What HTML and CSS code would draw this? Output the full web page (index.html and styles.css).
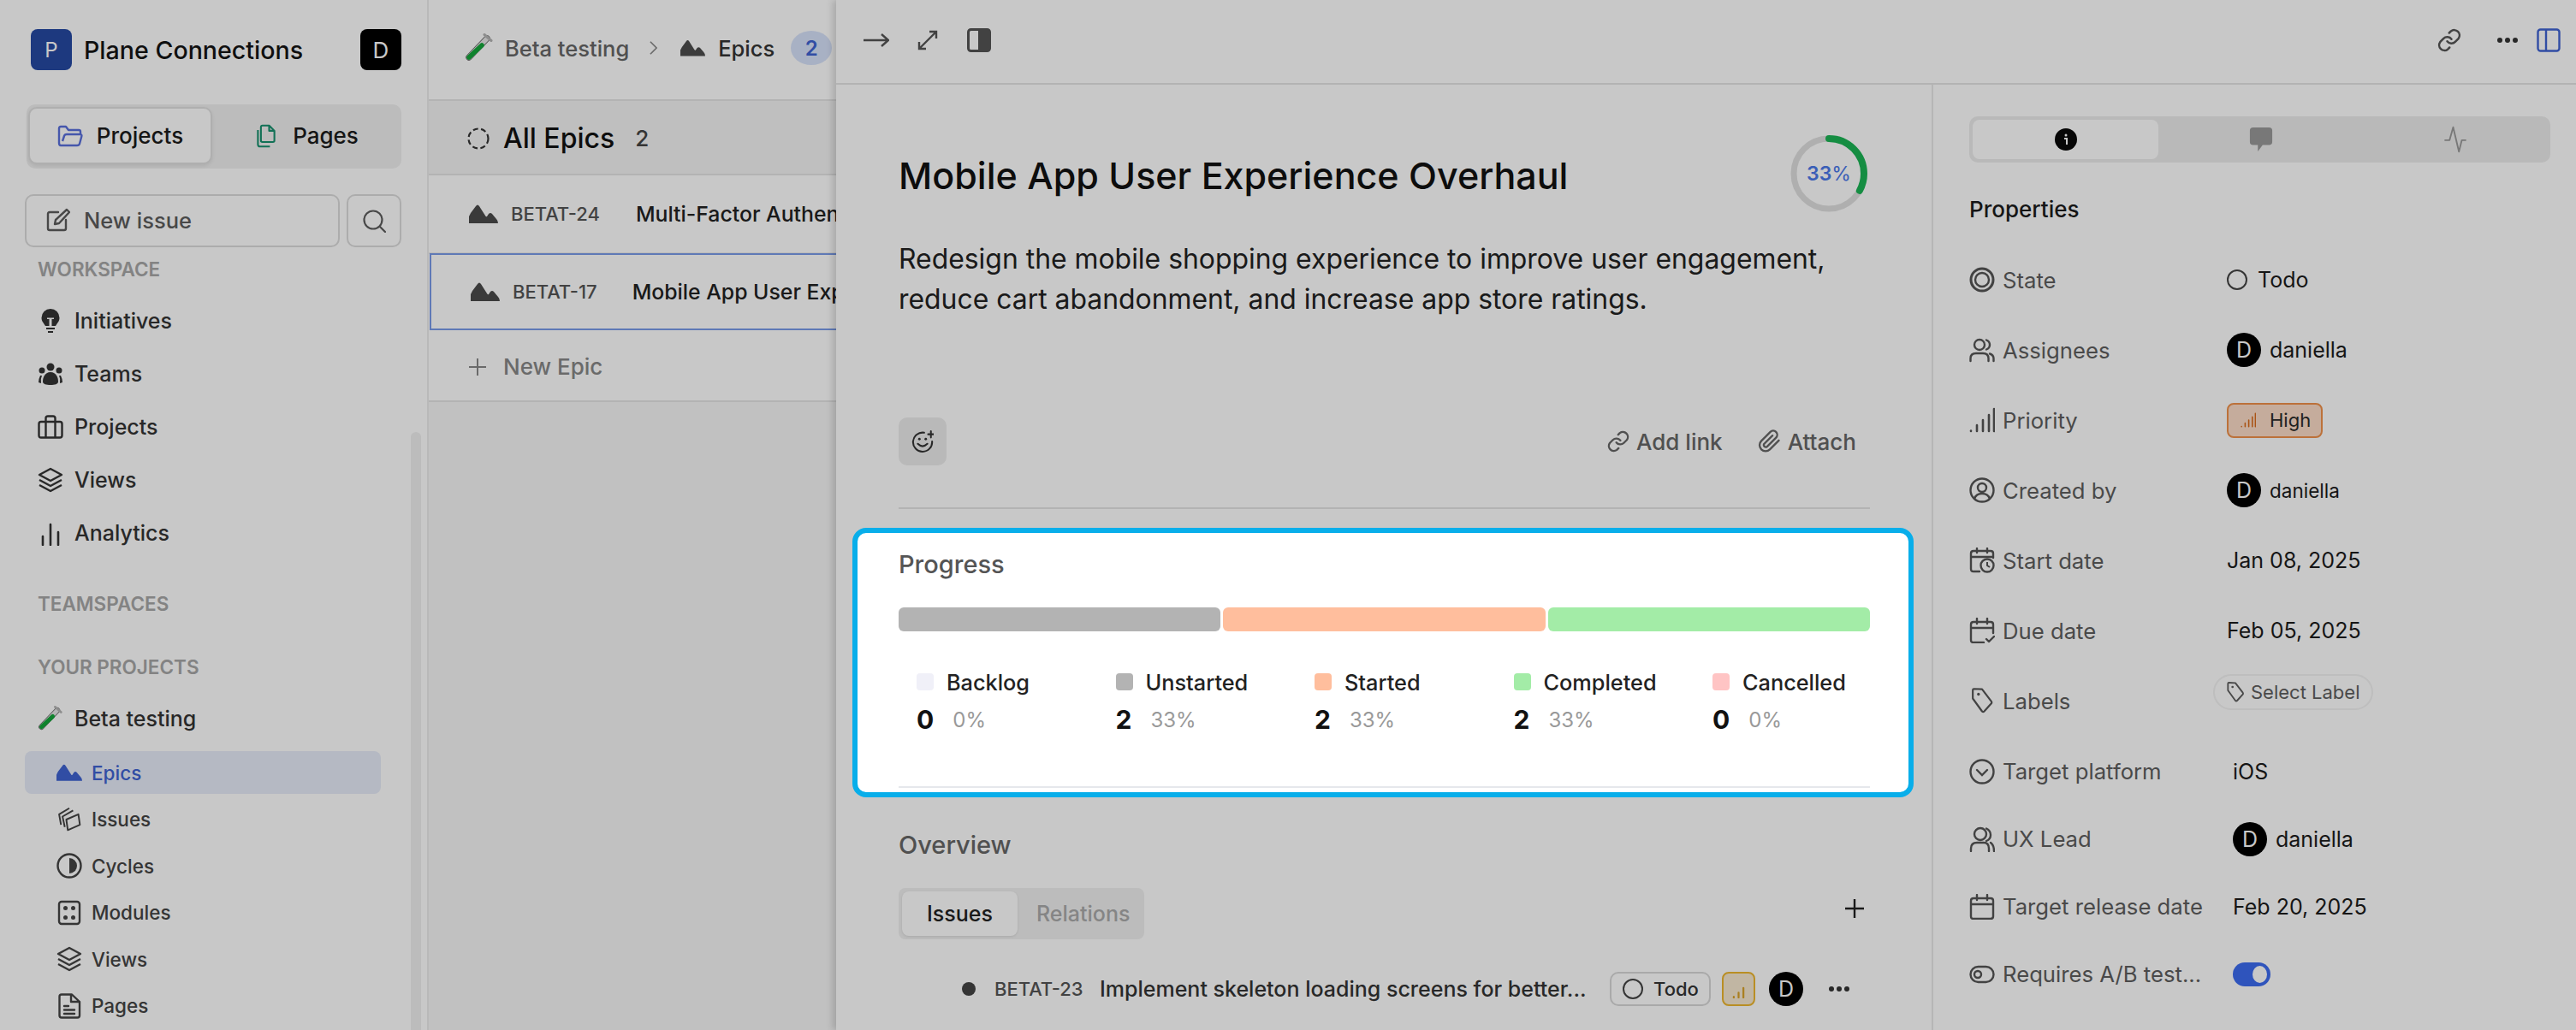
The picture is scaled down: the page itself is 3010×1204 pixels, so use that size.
FILE: index.html
```html
<!DOCTYPE html>
<html lang="en">
<head>
<meta charset="utf-8">
<title>Plane Connections</title>
<link rel="stylesheet" href="styles.css">
</head>
<body>
<svg class="defs" aria-hidden="true">
  <defs>
    <symbol id="epic" viewBox="0 0 34 22"><path fill="currentColor" d="M0 22V14Q1 12 2 10L8 2Q10 -1 12 2L19 13Q20 15 21 14L23 11Q25 9 27 11L32 17Q34 19 34 22Z"/></symbol>
    <symbol id="tube" viewBox="0 0 32 34">
      <path d="M25 6L4 28" stroke="#6a6a6a" stroke-width="7.500" stroke-linecap="round" fill="none"/>
      <path d="M25 6L4 28" stroke="#e6e6e6" stroke-width="5.500" stroke-linecap="round" fill="none"/>
      <path d="M19 14L4 28" stroke="#14a63a" stroke-width="5.500" stroke-linecap="round" fill="none"/>
      <path d="M22 1.500L30 8.500" stroke="#b5b5b5" stroke-width="3" stroke-linecap="round" fill="none"/>
    </symbol>
    <symbol id="layers" viewBox="0 0 30 30"><path fill="none" stroke="currentColor" stroke-width="2.400" stroke-linejoin="round" d="M15 2L28 9L15 16L2 9Z"/><path fill="none" stroke="currentColor" stroke-width="2.400" stroke-linejoin="round" d="M2 15L15 22L28 15M2 21L15 28L28 21"/></symbol>
    <symbol id="cal" viewBox="0 0 30 30"><path fill="none" stroke="currentColor" stroke-width="2.400" stroke-linecap="round" stroke-linejoin="round" d="M5 5H25Q28 5 28 8V26Q28 29 25 29H5Q2 29 2 26V8Q2 5 5 5ZM2 12H28M9 1V7M21 1V7"/></symbol>
    <symbol id="link" viewBox="0 0 24 24"><path fill="none" stroke="currentColor" stroke-width="2" stroke-linecap="round" stroke-linejoin="round" d="M10 13a5 5 0 0 0 7.500.5l3-3a5 5 0 0 0-7-7l-1.700 1.700M14 11a5 5 0 0 0-7.500-.5l-3 3a5 5 0 0 0 7 7l1.700-1.700"/></symbol>
    <symbol id="person" viewBox="0 0 30 30"><circle cx="12" cy="9" r="6" fill="none" stroke="currentColor" stroke-width="2.400"/><path fill="none" stroke="currentColor" stroke-width="2.400" stroke-linecap="round" d="M1.500 28V25Q1.500 19 8 19H16Q22.500 19 22.500 25V28M20 3.500Q24 5 24 9T20 14.500M24 19.500Q28.500 21 28.500 25V28"/></symbol>
    <symbol id="bars" viewBox="0 0 30 30"><path fill="none" stroke="currentColor" stroke-width="2.600" stroke-linecap="round" d="M2 28V27.500M9 28V21M16 28V15M23 28V9M29 28V2"/></symbol>
  </defs>
</svg>

<aside class="sidebar">
  <div class="workspace">
    <span class="logo">P</span>
    <span class="ws-name">Plane Connections</span>
    <span class="ws-user">D</span>
  </div>
  <div class="switch">
    <span class="switch-tab active">
      <svg class="sw-icon blue" viewBox="0 0 30 26"><path fill="none" stroke="currentColor" stroke-width="2.400" stroke-linejoin="round" d="M2 21V4Q2 2 4 2H10L13 6H25Q27 6 27 8V11M6 19L8 13Q8.500 11 11 11H26.500Q29 11 28.300 13.500L26 22Q25.500 24 23 24H4Q2 24 2 21"/></svg>
      Projects
    </span>
    <span class="switch-tab">
      <svg class="sw-icon teal" viewBox="0 0 26 32"><path fill="none" stroke="currentColor" stroke-width="2.400" stroke-linejoin="round" d="M8 2H17L24 9V22Q24 24 22 24H8Q6 24 6 22V4Q6 2 8 2ZM17 2V9H24M2 8V27Q2 30 5 30H18"/></svg>
      Pages
    </span>
  </div>
  <div class="quick">
    <button class="new-issue">
      <svg class="ni-icon" viewBox="0 0 28 28"><path fill="none" stroke="currentColor" stroke-width="2.400" stroke-linecap="round" stroke-linejoin="round" d="M14 5H4Q2 5 2 7V24Q2 26 4 26H21Q23 26 23 24V14M24 2L27 5L15 18L10 19L11 14Z"/></svg>
      New issue
    </button>
    <button class="search">
      <svg class="ni-icon" viewBox="0 0 28 28"><circle cx="13" cy="13" r="10.500" fill="none" stroke="currentColor" stroke-width="2.200"/><path d="M21 21L27 27" stroke="currentColor" stroke-width="2.200" stroke-linecap="round"/></svg>
    </button>
  </div>
  <nav class="nav">
    <div class="nav-head first">WORKSPACE</div>
    <a class="nav-row">
      <svg class="nav-icon" viewBox="0 0 24 30"><path fill="currentColor" d="M12 1A10.500 10.500 0 0 0 1.500 11.500C1.500 16 4.500 18 6 21H10.500V13H8V11.500H16V13H13.500V21H18C19.500 18 22.500 16 22.500 11.500A10.500 10.500 0 0 0 12 1ZM7 23H17V25H7ZM9 27H15V29H9Z"/></svg>
      Initiatives
    </a>
    <a class="nav-row">
      <svg class="nav-icon" viewBox="0 0 30 26"><g fill="currentColor"><circle cx="15" cy="5" r="4.500"/><circle cx="5" cy="9" r="3.500"/><circle cx="25" cy="9" r="3.500"/><path d="M15 11C8 11 6 18 6 22C6 25 10 26 15 26S24 25 24 22C24 18 22 11 15 11Z"/><path d="M3 15Q1 19 1 23L4 24Q3 19 5 15ZM27 15Q29 19 29 23L26 24Q27 19 25 15Z"/></g></svg>
      Teams
    </a>
    <a class="nav-row">
      <svg class="nav-icon" viewBox="0 0 30 28"><path fill="none" stroke="currentColor" stroke-width="2.400" stroke-linejoin="round" d="M4 8H26Q28.500 8 28.500 10.500V24Q28.500 26.500 26 26.500H4Q1.500 26.500 1.500 24V10.500Q1.500 8 4 8ZM9.500 8V26.500M20.500 8V26.500M9.500 8V4Q9.500 1.500 12 1.500H18Q20.500 1.500 20.500 4V8"/></svg>
      Projects
    </a>
    <a class="nav-row">
      <svg class="nav-icon"><use href="#layers"/></svg>
      Views
    </a>
    <a class="nav-row">
      <svg class="nav-icon" viewBox="0 0 30 30"><path d="M6 29V19M15 29V5M24 29V14" stroke="currentColor" stroke-width="2.600" stroke-linecap="round" fill="none"/></svg>
      Analytics
    </a>
    <div class="nav-head teams">TEAMSPACES</div>
    <div class="nav-head yours">YOUR PROJECTS</div>
    <a class="nav-row project">
      <svg class="nav-icon"><use href="#tube"/></svg>
      Beta testing
    </a>
    <div class="subnav">
      <a class="sub-row current"><svg class="sub-epic"><use href="#epic"/></svg>Epics</a>
      <a class="sub-row"><svg class="sub-icon" viewBox="0 0 30 34"><path fill="none" stroke="currentColor" stroke-width="2.200" stroke-linejoin="round" d="M4 24L1.500 10L15 2M9 27L6 13L20 5M13 31L11 17L27 10L29 24Z"/></svg>Issues</a>
      <a class="sub-row"><svg class="sub-icon" viewBox="0 0 30 30"><circle cx="15" cy="15" r="13.500" fill="none" stroke="currentColor" stroke-width="2.400"/><path fill="currentColor" d="M15 6A9 9 0 0 1 15 24Z"/></svg>Cycles</a>
      <a class="sub-row"><svg class="sub-icon" viewBox="0 0 30 30"><rect x="3" y="2" width="24" height="26" rx="3" fill="none" stroke="currentColor" stroke-width="2.400"/><g fill="currentColor"><circle cx="10.500" cy="9.500" r="2.500"/><circle cx="19.500" cy="9.500" r="2.500"/><circle cx="10.500" cy="20.500" r="2.500"/><circle cx="19.500" cy="20.500" r="2.500"/></g></svg>Modules</a>
      <a class="sub-row"><svg class="sub-icon"><use href="#layers"/></svg>Views</a>
      <a class="sub-row"><svg class="sub-icon" viewBox="0 0 30 30"><path fill="none" stroke="currentColor" stroke-width="2.400" stroke-linejoin="round" stroke-linecap="round" d="M6 1.500H18L27 10V26Q27 28.500 24.500 28.500H6Q3.500 28.500 3.500 26V4Q3.500 1.500 6 1.500ZM17 1.500V10H27M9 15H14M9 19.500H21M9 24H21"/></svg>Pages</a>
    </div>
  </nav>
  <span class="scroll-thumb"></span>
</aside>

<main class="main">
  <header class="crumbs">
    <svg class="tube"><use href="#tube"/></svg>
    <span class="crumb">Beta testing</span>
    <svg class="chev" viewBox="0 0 10 20"><path d="M1 2L9 10L1 18" fill="none" stroke="currentColor" stroke-width="1.800"/></svg>
    <svg class="epic-crumb"><use href="#epic"/></svg>
    <span class="crumb-now">Epics</span>
    <span class="badge">2</span>
  </header>
  <div class="listbar">
    <svg class="dash" viewBox="0 0 26 26"><circle cx="13" cy="13" r="11.500" fill="none" stroke="currentColor" stroke-width="2.200" stroke-dasharray="6 3.500"/></svg>
    <span class="listname">All Epics</span>
    <span class="listcount">2</span>
  </div>
  <div class="list">
    <div class="epic-row"><svg class="epic-i"><use href="#epic"/></svg><span class="epic-id">BETAT-24</span><span class="epic-t">Multi-Factor Authen</span></div>
    <div class="epic-row selected"><svg class="epic-i"><use href="#epic"/></svg><span class="epic-id">BETAT-17</span><span class="epic-t">Mobile App User Exp</span></div>
    <div class="epic-row add"><svg class="plus" viewBox="0 0 20 20"><path d="M10 0V20M0 10H20" stroke="currentColor" stroke-width="2"/></svg><span>New Epic</span></div>
  </div>
</main>

<section class="peek">
  <div class="peek-bar">
    <svg class="pb-arrow" viewBox="0 0 30 16"><path d="M0 8H28M21 1L29 8L21 15" fill="none" stroke="currentColor" stroke-width="2.400"/></svg>
    <svg class="pb-expand" viewBox="0 0 24 24"><path d="M14 2H22V10M22 2L2 22M2 14V22H10" fill="none" stroke="currentColor" stroke-width="2.400"/></svg>
    <svg class="pb-side" viewBox="0 0 28 28"><rect x="1.500" y="1.500" width="25" height="25" rx="3" fill="none" stroke="currentColor" stroke-width="3"/><path fill="currentColor" d="M13 2H24Q26 2 26 4V24Q26 26 24 26H13Z"/></svg>
    <svg class="pb-link"><use href="#link"/></svg>
    <span class="pb-dots"><i></i><i></i><i></i></span>
    <svg class="pb-panel" viewBox="0 0 28 28"><rect x="1.500" y="1.500" width="25" height="25" rx="3" fill="none" stroke="currentColor" stroke-width="2.400"/><path d="M11 2V26" stroke="currentColor" stroke-width="2.400"/></svg>
  </div>
  <div class="peek-body">
    <div class="detail">
      <div class="title-row">
        <h1 class="title">Mobile App User Experience Overhaul</h1>
        <div class="ring">
          <svg class="ring-svg" viewBox="0 0 90 90"><circle cx="45" cy="45" r="41" fill="none" stroke="#e0e0e0" stroke-width="7"/><circle cx="45" cy="45" r="41" fill="none" stroke="#1cb455" stroke-width="8" stroke-linecap="round" stroke-dasharray="85 260" transform="rotate(-90 45 45)"/></svg>
          <span class="ring-text"><b>33</b>%</span>
        </div>
      </div>
      <p class="desc">Redesign the mobile shopping experience to improve user engagement, reduce cart abandonment, and increase app store ratings.</p>
      <div class="actions">
        <button class="react"><svg class="react-i" viewBox="0 0 28 30"><path fill="none" stroke="currentColor" stroke-width="2.200" stroke-linecap="round" d="M16 4A12 12 0 1 0 26 15M8 18Q14 24 20 18M21 6H28M24.500 2V10"/><circle cx="10" cy="12" r="1.600" fill="currentColor"/><circle cx="18" cy="12" r="1.600" fill="currentColor"/></svg></button>
        <span class="act first"><svg class="act-i"><use href="#link"/></svg>Add link</span>
        <span class="act"><svg class="act-i" viewBox="0 0 24 24"><path fill="none" stroke="currentColor" stroke-width="2" stroke-linecap="round" stroke-linejoin="round" d="M21 11L12 20a6 6 0 0 1-8.500-8.500l9-9a4 4 0 0 1 5.700 5.700l-9 9a2 2 0 0 1-2.800-2.800l8.300-8.300"/></svg>Attach</span>
      </div>
      <hr class="rule">
      <div class="spot">
        <div class="spot-title">Progress</div>
        <div class="bar">
          <span class="seg gray"></span><span class="seg orange"></span><span class="seg green"></span>
        </div>
        <div class="legend">
          <div class="lg"><span class="lg-name"><i class="sw pale"></i>Backlog</span><span class="lg-num"><b>0</b><em>0%</em></span></div>
          <div class="lg"><span class="lg-name"><i class="sw gray"></i>Unstarted</span><span class="lg-num"><b>2</b><em>33%</em></span></div>
          <div class="lg"><span class="lg-name"><i class="sw orange"></i>Started</span><span class="lg-num"><b>2</b><em>33%</em></span></div>
          <div class="lg"><span class="lg-name"><i class="sw green"></i>Completed</span><span class="lg-num"><b>2</b><em>33%</em></span></div>
          <div class="lg"><span class="lg-name"><i class="sw pink"></i>Cancelled</span><span class="lg-num"><b>0</b><em>0%</em></span></div>
        </div>
        <div class="spot-line"></div>
      </div>
      <div class="over-title">Overview</div>
      <div class="over-row">
        <div class="ov-tabs"><span class="ov-tab on">Issues</span><span class="ov-tab">Relations</span></div>
        <svg class="ov-plus" viewBox="0 0 22 22"><path d="M11 0V22M0 11H22" stroke="currentColor" stroke-width="2.400"/></svg>
      </div>
      <div class="issue">
        <span class="dot"></span>
        <span class="iss-id">BETAT-23</span>
        <span class="iss-t">Implement skeleton loading screens for better...</span>
        <span class="chip"><i class="ring-i"></i>Todo</span>
        <span class="prio"><svg class="prio-i" viewBox="0 0 16 16"><path d="M2 15V14M8 15V9M14 15V3" fill="none" stroke="currentColor" stroke-width="2.400" stroke-linecap="round"/></svg></span>
        <span class="av">D</span>
        <span class="iss-dots"><i></i><i></i><i></i></span>
      </div>
    </div>
    <aside class="props">
      <div class="pt-tabs">
        <span class="pt on"><svg class="pt-i" viewBox="0 0 26 26"><circle cx="13" cy="13" r="13" fill="#0a0a0a"/><circle cx="13" cy="8" r="1.500" fill="#fff"/><path d="M11 12H14V19" fill="none" stroke="#fff" stroke-width="2"/></svg></span>
        <span class="pt"><svg class="pt-i gray" viewBox="0 0 30 32"><path fill="currentColor" d="M5 1H25Q29 1 29 5V19Q29 23 25 23H17L11 31V23H5Q1 23 1 19V5Q1 1 5 1Z"/></svg></span>
        <span class="pt"><svg class="pt-i gray" viewBox="0 0 30 38"><path fill="none" stroke="currentColor" stroke-width="2.200" stroke-linejoin="round" d="M0 20H7L12 2L20 36L24 20H30"/></svg></span>
      </div>
      <h2 class="props-h">Properties</h2>
      <div class="rows">
        <div class="prow"><span class="pl"><svg class="pi" viewBox="0 0 30 30"><circle cx="15" cy="15" r="13" fill="none" stroke="currentColor" stroke-width="3"/><circle cx="15" cy="15" r="8" fill="none" stroke="currentColor" stroke-width="2.400"/></svg>State</span><span class="pv"><i class="ring-i big"></i>Todo</span></div>
        <div class="prow"><span class="pl"><svg class="pi"><use href="#person"/></svg>Assignees</span><span class="pv"><span class="av">D</span>daniella</span></div>
        <div class="prow"><span class="pl"><svg class="pi"><use href="#bars"/></svg>Priority</span><span class="pv"><span class="high"><svg class="high-i"><use href="#bars"/></svg>High</span></span></div>
        <div class="prow"><span class="pl"><svg class="pi" viewBox="0 0 30 30"><circle cx="15" cy="15" r="13.500" fill="none" stroke="currentColor" stroke-width="2.400"/><circle cx="15" cy="12" r="5" fill="none" stroke="currentColor" stroke-width="2.400"/><path d="M6 25Q8 19 15 19T24 25" fill="none" stroke="currentColor" stroke-width="2.400"/></svg>Created by</span><span class="pv small"><span class="av">D</span>daniella</span></div>
        <div class="prow"><span class="pl"><svg class="pi" viewBox="0 0 30 30"><path fill="none" stroke="currentColor" stroke-width="2.400" stroke-linecap="round" stroke-linejoin="round" d="M12 28H5Q2 28 2 25V7Q2 4 5 4H25Q28 4 28 7V12M2 11H28M9 1V6M21 1V6"/><circle cx="21" cy="21" r="7.500" fill="none" stroke="currentColor" stroke-width="2.400"/><path d="M21 17V21L24 23" fill="none" stroke="currentColor" stroke-width="2"/></svg>Start date</span><span class="pv">Jan 08, 2025</span></div>
        <div class="prow"><span class="pl"><svg class="pi" viewBox="0 0 30 30"><path fill="none" stroke="currentColor" stroke-width="2.400" stroke-linecap="round" stroke-linejoin="round" d="M17 29H5Q2 29 2 26V8Q2 5 5 5H25Q28 5 28 8V18M2 12H28M9 1V7M21 1V7M20 25L23 28L29 22"/></svg>Due date</span><span class="pv">Feb 05, 2025</span></div>
        <div class="prow"><span class="pl"><svg class="pi" viewBox="0 0 30 36"><path fill="none" stroke="currentColor" stroke-width="2.600" stroke-linejoin="round" d="M2 3Q2 1.500 3.500 1.500L15 2L28 19Q29 20.500 28 22L18 33Q16.500 34.500 15 33L2 15Z"/><circle cx="10" cy="9" r="2" fill="currentColor"/></svg>Labels</span><span class="pv"><span class="sel"><svg class="sel-i" viewBox="0 0 30 36"><path fill="none" stroke="currentColor" stroke-width="2.800" stroke-linejoin="round" d="M2 3Q2 1.500 3.500 1.500L15 2L28 19Q29 20.500 28 22L18 33Q16.500 34.500 15 33L2 15Z"/><circle cx="10" cy="9" r="2" fill="currentColor"/></svg>Select Label</span></span></div>
        <div class="prow cust"><span class="pl"><svg class="pi" viewBox="0 0 30 30"><circle cx="15" cy="15" r="13.500" fill="none" stroke="currentColor" stroke-width="2.400"/><path d="M9 13L15 19L21 13" fill="none" stroke="currentColor" stroke-width="2.400" stroke-linecap="round"/></svg>Target platform</span><span class="pv">iOS</span></div>
        <div class="prow cust"><span class="pl"><svg class="pi" viewBox="0 0 30 30"><circle cx="13" cy="9" r="7" fill="none" stroke="currentColor" stroke-width="2.400"/><path fill="none" stroke="currentColor" stroke-width="2.400" stroke-linecap="round" d="M2 29V26Q2 19 9 19H17Q23 19 23 26V29M20 2.500Q25 5 25 10T20 17M25 19Q29 22 29 29"/></svg>UX Lead</span><span class="pv"><span class="av">D</span>daniella</span></div>
        <div class="prow cust"><span class="pl"><svg class="pi"><use href="#cal"/></svg>Target release date</span><span class="pv">Feb 20, 2025</span></div>
        <div class="prow cust"><span class="pl"><svg class="pi" viewBox="0 0 30 22"><rect x="1.500" y="2" width="27" height="18" rx="9" fill="none" stroke="currentColor" stroke-width="2.400"/><circle cx="10" cy="11" r="4" fill="none" stroke="currentColor" stroke-width="2.400"/></svg>Requires A/B test...</span><span class="pv"><span class="toggle"><i></i></span></span></div>
      </div>
    </aside>
  </div>
</section>
</body>
</html>
```
FILE: styles.css
```css
* { box-sizing: border-box; }
html, body { margin: 0; height: 1204px; overflow: hidden; }
body {
  width: 3010px;
  display: flex;
  position: relative;
  background: #fff;
  color: #1c1c1c;
  font-family: Inter, "Liberation Sans", sans-serif;
  font-size: 26px;
}
button { font: inherit; color: inherit; background: none; padding: 0; }
i, em { font-style: normal; }
.defs { width: 0; height: 0; position: absolute; }

/* sidebar */
.sidebar { width: 501px; flex: none; border-right: 2px solid #ececec; height: 1204px; overflow: hidden; position: relative; }
.workspace { display: flex; align-items: center; padding: 34px 30px 0 36px; }
.logo { width: 48px; height: 48px; border-radius: 8px; background: #2549a3; color: #fff; display: grid; place-items: center; font-size: 24px; }
.ws-name { margin-left: 14px; font-size: 28.600px; font-weight: 500; color: #141414; }
.ws-user { margin-left: auto; width: 48px; height: 48px; border-radius: 8px; background: #000; color: #fff; display: grid; place-items: center; font-size: 26px; }
.switch { margin: 40px 30px 0 31px; height: 75px; padding: 3px 2px; background: #f0f0f0; border-radius: 10px; display: grid; grid-template-columns: 215px 1fr; }
.switch-tab { display: flex; align-items: center; justify-content: center; gap: 16px; font-size: 26px; font-weight: 500; color: #1c1c1c; height: 67px; border-radius: 10px; }
.switch-tab.active { background: #fff; border: 2px solid #e0e0e0; box-shadow: 0 2px 4px rgba(0,0,0,.08); }
.sw-icon { width: 30px; height: 28px; }
.blue { color: #5a70dc; }
.teal { color: #18906e; }
.quick { margin: 30px 30px 0 29px; display: flex; gap: 8px; }
.new-issue, .search { height: 62px; border: 2px solid #dcdcdc; border-radius: 10px; display: flex; align-items: center; }
.new-issue { width: 369px; padding-left: 23px; gap: 16px; font-size: 25.500px; font-weight: 500; color: #5c5c5c; padding-bottom: 2px; }
.search { width: 64px; justify-content: center; color: #5c5c5c; }
.ni-icon { width: 28px; height: 28px; }
.nav { padding: 0 29px; }
.nav-head { height: 30px; line-height: 30px; font-size: 22.500px; font-weight: 600; color: #a8a8a8; padding-left: 15px; }
.nav-head.first { margin-top: 11px; margin-bottom: 14px; }
.nav-head.teams { margin-top: 37px; }
.nav-head.yours { margin-top: 44px; }
.nav-row { display: flex; align-items: center; height: 62px; padding-left: 15px; gap: 13px; font-size: 25px; font-weight: 500; color: #333; }
.nav-row.project { margin-top: 14px; color: #333; }
.nav-icon { width: 30px; height: 30px; flex: none; color: #333; }
.subnav { margin-top: 7px; display: flex; flex-direction: column; gap: 4.500px; }
.sub-row { display: flex; align-items: center; height: 50px; width: 416px; padding-left: 37px; gap: 11px; font-size: 22.500px; font-weight: 500; color: #444; border-radius: 8px; }
.sub-row.current { background: #e7ecf9; color: #3f63d2; }
.sub-epic { width: 30px; height: 20px; }
.sub-icon { width: 30px; height: 30px; color: #444; }
.scroll-thumb { position: absolute; left: 480px; top: 505px; width: 12px; height: 720px; border-radius: 6px; background: #f0f0f0; }

/* main list */
.main { flex: none; width: 476px; background: #f6f6f6; overflow: hidden; }
.crumbs { height: 118px; background: #fff; border-bottom: 2px solid #e4e4e4; display: flex; align-items: center; padding: 0 0 4px 43px; white-space: nowrap; }
.tube { width: 32px; height: 34px; flex: none; }
.crumb { margin-left: 14px; font-size: 25.500px; color: #666; font-weight: 500; }
.chev { width: 9px; height: 18px; margin-left: 24px; color: #888; }
.epic-crumb { width: 29px; height: 20px; margin-left: 27px; color: #4d4d4d; }
.crumb-now { margin-left: 15px; font-size: 25.500px; font-weight: 500; color: #333; }
.badge { margin-left: 19px; width: 48px; height: 40px; flex: none; border-radius: 50%; background: #d7e2fa; color: #3f63d2; display: grid; place-items: center; font-size: 24px; font-weight: 600; }
.listbar { height: 87px; border-bottom: 2px solid #e4e4e4; display: flex; align-items: center; padding: 2px 0 0 45px; background: #f4f4f4; }
.dash { width: 26px; height: 26px; color: #333; }
.listname { margin-left: 16px; font-size: 32px; font-weight: 500; color: #111; }
.listcount { margin-left: 24px; font-size: 26px; font-weight: 500; color: #444; }
.list { background: #fff; white-space: nowrap; }
.epic-row { height: 92px; display: flex; align-items: center; padding-left: 47px; border-bottom: 2px solid #ececec; overflow: hidden; }
.epic-row.selected { height: 90px; border: 2px solid #7a9be8; border-right: 0; margin-left: 1px; margin-top: -1px; padding-left: 46px; }
.epic-i { width: 34px; height: 22px; color: #4a4a4a; flex: none; }
.epic-id { margin-left: 15px; font-size: 22px; font-weight: 500; color: #555; flex: none; }
.epic-t { margin-left: 42px; flex: none; font-size: 24.800px; font-weight: 450; color: #222; }
.selected .epic-t { margin-left: 41px; }
.epic-row.add { height: 84px; border-bottom: 2px solid #e4e4e4; color: #888; font-size: 26px; font-weight: 500; padding-top: 3px; }
.plus { width: 20px; height: 20px; margin-right: 20px; }

/* peek panel */
.peek { position: absolute; left: 977px; top: 0; width: 2033px; height: 1204px; background: #fff; box-shadow: -4px 0 8px rgba(0,0,0,.16); }
.peek-bar { height: 99px; border-bottom: 2px solid #e4e4e4; display: flex; align-items: center; padding: 0 18px 4px 32px; color: #555; }
.pb-arrow { width: 30px; height: 16px; }
.pb-expand { width: 24px; height: 24px; margin-left: 33px; }
.pb-side { width: 28px; height: 28px; margin-left: 34px; }
.pb-link { width: 30px; height: 30px; margin-left: auto; }
.pb-dots { display: flex; gap: 3px; margin-left: 41px; }
.pb-dots i, .iss-dots i { width: 6px; height: 6px; border-radius: 50%; background: #333; }
.pb-panel { width: 28px; height: 28px; margin-left: 22px; color: #3f63d2; }
.peek-body { display: flex; }
.detail { width: 1282px; height: 1105px; border-right: 2px solid #e8e8e8; padding: 59px 72px 0 73px; }
.title-row { display: flex; align-items: center; justify-content: space-between; height: 90px; }
.title { margin: 4px 0 0; font-size: 43px; line-height: 50px; font-weight: 450; color: #111; }
.ring { display: grid; width: 90px; height: 90px; margin-right: 3px; }
.ring-svg, .ring-text { grid-area: 1 / 1; }
.ring-svg { width: 90px; height: 90px; }
.ring-text { place-self: center; font-size: 23px; color: #4a78ea; }
.ring-text b { font-weight: 600; }
.desc { margin: 31px 0 0; font-size: 31.900px; line-height: 47px; color: #222; width: 1130px; }
.actions { margin-top: 115px; display: flex; align-items: center; height: 56px; }
.react { width: 56px; height: 56px; border: 0; border-radius: 10px; background: #ececec; display: grid; place-items: center; color: #333; }
.react-i { width: 26px; height: 28px; }
.act { display: flex; align-items: center; gap: 7px; font-size: 26px; font-weight: 500; color: #666; margin-left: 25px; margin-right: 16px; }
.act.first { margin-left: auto; }
.act-i { width: 28px; height: 28px; }
.rule { margin: 49px 0 0; border: 0; border-top: 2px solid #e4e4e4; }

/* spotlight */
.spot {
  position: relative; z-index: 10;
  margin: 22px -51px 0 -54px;
  height: 315px;
  padding: 19px 45px 0 48px;
  background: #fff;
  border: 6px solid #08aeea;
  border-radius: 16px;
  box-shadow: 0 0 0 4000px rgba(0,0,0,.216);
  display: flex; flex-direction: column;
}
.spot-title { font-size: 29px; line-height: 36px; font-weight: 500; color: #555; }
.bar { margin-top: 32px; height: 28px; display: flex; gap: 3px; }
.seg { flex: 1; border-radius: 6px; }
.gray { background: #b3b3b3; }
.orange { background: #ffbe9d; }
.green { background: #a3eca7; }
.pale { background: #f0f0f8; }
.pink { background: #ffc4c4; }
.legend { margin-top: 44px; padding-left: 21px; display: grid; grid-template-columns: repeat(5, 232.500px); }
.lg { display: flex; flex-direction: column; gap: 14px; }
.lg-name { display: flex; align-items: center; height: 30px; font-size: 25.300px; font-weight: 500; color: #222; }
.sw { width: 20px; height: 20px; border-radius: 4px; margin-right: 15px; }
.lg-num { display: flex; align-items: center; height: 30px; }
.lg-num b { font-size: 30px; font-weight: 700; color: #111; }
.lg-num em { margin-left: 22px; font-size: 24px; color: #999; }
.spot-line { margin-top: auto; margin-bottom: 5px; border-top: 2px solid #e6e8ec; }

.over-title { margin-top: 38px; font-size: 29px; line-height: 36px; font-weight: 500; color: #666; }
.over-row { margin-top: 32px; display: flex; align-items: center; justify-content: space-between; padding-right: 7px; }
.ov-tabs { display: flex; height: 60px; width: 287px; padding: 4px; background: #f0f0f0; border-radius: 8px; }
.ov-tab { flex: none; display: grid; place-items: center; padding: 0 22px; font-size: 25px; font-weight: 500; color: #aaa; height: 52px; }
.ov-tab.on { width: 135px; background: #fff; color: #222; border-radius: 8px; box-shadow: 0 1px 3px rgba(0,0,0,.1); }
.ov-plus { width: 22px; height: 22px; color: #222; margin-bottom: 12px; }
.issue { margin-top: 38px; height: 40px; display: flex; align-items: center; padding-left: 74px; white-space: nowrap; }
.dot { width: 16px; height: 16px; border-radius: 50%; background: #444; }
.iss-id { margin-left: 22px; width: 123px; font-size: 22px; font-weight: 500; color: #555; }
.iss-t { width: 596px; font-size: 25px; font-weight: 500; color: #333; }
.chip { display: flex; align-items: center; gap: 12px; width: 118px; height: 40px; padding-left: 13px; border: 2px solid #d8d8d8; border-radius: 10px; font-size: 22px; font-weight: 500; color: #333; }
.ring-i { width: 24px; height: 24px; border: 2px solid #444; border-radius: 50%; flex: none; }
.prio { margin-left: 13px; width: 39px; height: 40px; border: 2px solid #ecb52e; background: #f6e8d0; border-radius: 8px; display: grid; place-items: end center; padding-bottom: 7px; color: #d9a32a; }
.prio-i { width: 15px; height: 15px; }
.av { width: 40px; height: 40px; border-radius: 50%; background: #000; color: #fff; display: grid; place-items: center; font-size: 25px; flex: none; }
.issue .av { margin-left: 16px; }
.iss-dots { margin-left: 30px; display: flex; gap: 3px; }

/* properties */
.props { flex: 1; padding: 37px 30px 0 42px; }
.pt-tabs { height: 54px; padding: 4px; background: #ececec; border-radius: 10px; display: grid; grid-template-columns: 217px 1fr 1fr; }
.pt { display: grid; place-items: center; border-radius: 8px; height: 46px; }
.pt + .pt { padding-left: 12px; }
.pt.on { background: #fff; }
.pt-i { width: 26px; height: 26px; }
.pt-i.gray { width: 28px; height: 32px; color: #999; background: none; }
.props-h { margin: 37px 0 23px; font-size: 26px; line-height: 36px; font-weight: 500; color: #1c1c1c; }
.prow { display: flex; align-items: center; height: 82px; }
.prow.cust { height: 79px; }
.prow:not(.cust) + .cust { margin-top: 2px; }
.pl { width: 301px; flex: none; display: flex; align-items: center; gap: 9px; font-size: 25.700px; color: #5e5e5e; white-space: nowrap; font-weight: 400; }
.pi { width: 30px; height: 30px; flex: none; color: #555; }
.pv { display: flex; align-items: center; gap: 10px; font-size: 25px; color: #1c1c1c; white-space: nowrap; }
.pv.small { font-size: 22.500px; }
.cust .pv { margin-left: 7px; }
.pv .ring-i { margin-right: 2px; }
.high { display: flex; align-items: center; gap: 16px; width: 112px; height: 41px; padding-left: 14px; border: 2px solid #f0914a; background: #fbdcc7; border-radius: 8px; font-size: 22px; color: #2a2a2a; }
.high-i { width: 18px; height: 18px; color: #d96a1b; }
.sel { display: flex; align-items: center; gap: 8px; margin: -20px 0 0 -16px; height: 42px; padding: 0 14px; border: 2px solid #f2f2f2; border-radius: 21px; font-size: 22px; color: #5e5e5e; }
.sel-i { width: 20px; height: 24px; }
.toggle { display: flex; align-items: center; justify-content: flex-end; width: 44px; height: 28px; border-radius: 14px; background: #3d6cf0; padding-right: 4px; }
.toggle i { width: 17px; height: 20px; border-radius: 50%; background: #fff; }
```
